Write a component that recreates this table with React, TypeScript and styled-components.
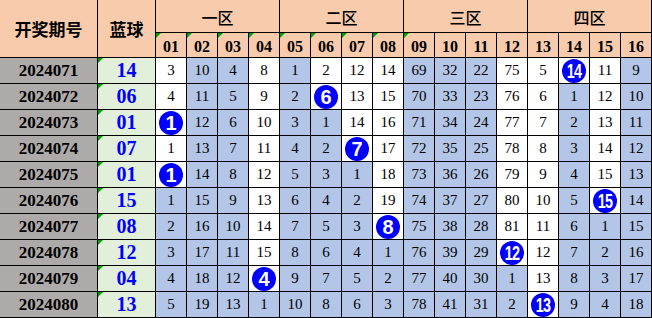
import React from "react";
import styled, { createGlobalStyle, css } from "styled-components";

const Global = createGlobalStyle`
  html, body { margin: 0; padding: 0; background: #ffffff; }
  #root { width: 652px; height: 318px; }
`;

const COLORS = {
  line: "#000000",
  peach: "#F8CBAD",
  gray: "#AEAAAA",
  green: "#E2EFDA",
  blue: "#B4C6E7",
  white: "#FFFFFF",
  ball: "#0000FF",
  tick: "#00A000",
};

const Grid = styled.div`
  display: grid;
  grid-template-columns: 97px 57px repeat(16, 30px);
  grid-template-rows: 32px 24px repeat(10, 25px);
  gap: 1px;
  padding: 0 1px 1px 0;
  background: ${COLORS.line};
  width: 652px;
  height: 318px;
  box-sizing: border-box;
`;

const tick = css`
  &::before {
    content: "";
    position: absolute;
    left: 0;
    top: 0;
    border-top: 5px solid ${COLORS.tick};
    border-right: 5px solid transparent;
  }
`;

const HeadCell = styled.div<{ $rows?: number; $cols?: number; $tick?: boolean }>`
  position: relative;
  background: ${COLORS.peach};
  display: flex;
  align-items: center;
  justify-content: center;
  grid-row: span ${(p) => p.$rows ?? 1};
  grid-column: span ${(p) => p.$cols ?? 1};
  ${(p) => p.$tick && tick}
`;

const HeadTitle = styled.span`
  font-family: "Noto Sans CJK SC", sans-serif;
  font-weight: 700;
  font-size: 17px;
  color: #000;
  line-height: 1;
`;

const ZoneTitle = styled.span`
  font-family: "Noto Sans CJK SC", sans-serif;
  font-weight: 500;
  font-size: 16px;
  color: #000;
  line-height: 1;
  padding-top: 2px;
`;

const HeadNum = styled.span`
  font-family: "Liberation Serif", serif;
  font-weight: 700;
  font-size: 16px;
  color: #000;
  padding-top: 3px;
`;

const PeriodCell = styled.div`
  background: ${COLORS.gray};
  display: flex;
  align-items: center;
  justify-content: center;
  font-family: "Liberation Serif", serif;
  font-weight: 700;
  font-size: 17px;
  color: #000;
`;

const BlueCell = styled.div`
  position: relative;
  background: ${COLORS.green};
  display: flex;
  align-items: center;
  justify-content: center;
  font-family: "Liberation Serif", serif;
  font-weight: 700;
  font-size: 20px;
  color: ${COLORS.ball};
  ${tick}
`;

const NumCell = styled.div<{ $blue: boolean }>`
  background: ${(p) => (p.$blue ? COLORS.blue : COLORS.white)};
  display: flex;
  align-items: center;
  justify-content: center;
  font-family: "Liberation Serif", serif;
  font-size: 15px;
  color: #000;
`;

const Ball = styled.span<{ $two: boolean }>`
  width: 24px;
  height: 24px;
  border-radius: 50%;
  background: ${COLORS.ball};
  color: #fff;
  display: flex;
  align-items: center;
  justify-content: center;
  font-family: "Liberation Sans", Arial, sans-serif;
  font-weight: 700;
  font-size: 20px;
  line-height: 1;
  span {
    display: inline-block;
    transform: ${(p) => (p.$two ? "scaleX(0.72)" : "none")};
    letter-spacing: ${(p) => (p.$two ? "-1px" : "0")};
  }
`;

type Row = { p: string; b: string; v: number[]; hit: number; c: string };

const rows: Row[] = [
  { p: "2024071", b: "14", v: [3, 10, 4, 8, 1, 2, 12, 14, 69, 32, 22, 75, 5, 14, 11, 9], hit: 13, c: "WBBWBWWWBBBWWWWB" },
  { p: "2024072", b: "06", v: [4, 11, 5, 9, 2, 6, 13, 15, 70, 33, 23, 76, 6, 1, 12, 10], hit: 5, c: "WBBWBWWWBBBWWBWB" },
  { p: "2024073", b: "01", v: [1, 12, 6, 10, 3, 1, 14, 16, 71, 34, 24, 77, 7, 2, 13, 11], hit: 0, c: "WBBWBBWWBBBWWBWB" },
  { p: "2024074", b: "07", v: [1, 13, 7, 11, 4, 2, 7, 17, 72, 35, 25, 78, 8, 3, 14, 12], hit: 6, c: "WBBWBBWWBBBWWBWB" },
  { p: "2024075", b: "01", v: [1, 14, 8, 12, 5, 3, 1, 18, 73, 36, 26, 79, 9, 4, 15, 13], hit: 0, c: "WBBWBBBWBBBWWBWB" },
  { p: "2024076", b: "15", v: [1, 15, 9, 13, 6, 4, 2, 19, 74, 37, 27, 80, 10, 5, 15, 14], hit: 14, c: "BBBWBBBWBBBWWBWB" },
  { p: "2024077", b: "08", v: [2, 16, 10, 14, 7, 5, 3, 8, 75, 38, 28, 81, 11, 6, 1, 15], hit: 7, c: "BBBWBBBWBBBWWBBB" },
  { p: "2024078", b: "12", v: [3, 17, 11, 15, 8, 6, 4, 1, 76, 39, 29, 12, 12, 7, 2, 16], hit: 11, c: "BBBWBBBBBBBWWBBB" },
  { p: "2024079", b: "04", v: [4, 18, 12, 4, 9, 7, 5, 2, 77, 40, 30, 1, 13, 8, 3, 17], hit: 3, c: "BBBWBBBBBBBBWBBB" },
  { p: "2024080", b: "13", v: [5, 19, 13, 1, 10, 8, 6, 3, 78, 41, 31, 2, 13, 9, 4, 18], hit: 12, c: "BBBBBBBBBBBBWBBB" },
];

const zones = ["一区", "二区", "三区", "四区"];
const nums = Array.from({ length: 16 }, (_, i) => String(i + 1).padStart(2, "0"));

export default function App() {
  return (
    <>
      <Global />
      <Grid>
        <HeadCell $rows={2}>
          <HeadTitle>开奖期号</HeadTitle>
        </HeadCell>
        <HeadCell $rows={2}>
          <HeadTitle>蓝球</HeadTitle>
        </HeadCell>
        {zones.map((z) => (
          <HeadCell key={z} $cols={4}>
            <ZoneTitle>{z}</ZoneTitle>
          </HeadCell>
        ))}
        {nums.map((n, i) => (
          <HeadCell key={n} $tick={i < 9}>
            <HeadNum>{n}</HeadNum>
          </HeadCell>
        ))}
        {rows.map((r) => (
          <React.Fragment key={r.p}>
            <PeriodCell>{r.p}</PeriodCell>
            <BlueCell>{r.b}</BlueCell>
            {r.v.map((val, i) => (
              <NumCell key={i} $blue={r.c[i] === "B"}>
                {i === r.hit ? (
                  <Ball $two={val >= 10}>
                    <span>{val}</span>
                  </Ball>
                ) : (
                  val
                )}
              </NumCell>
            ))}
          </React.Fragment>
        ))}
      </Grid>
    </>
  );
}
